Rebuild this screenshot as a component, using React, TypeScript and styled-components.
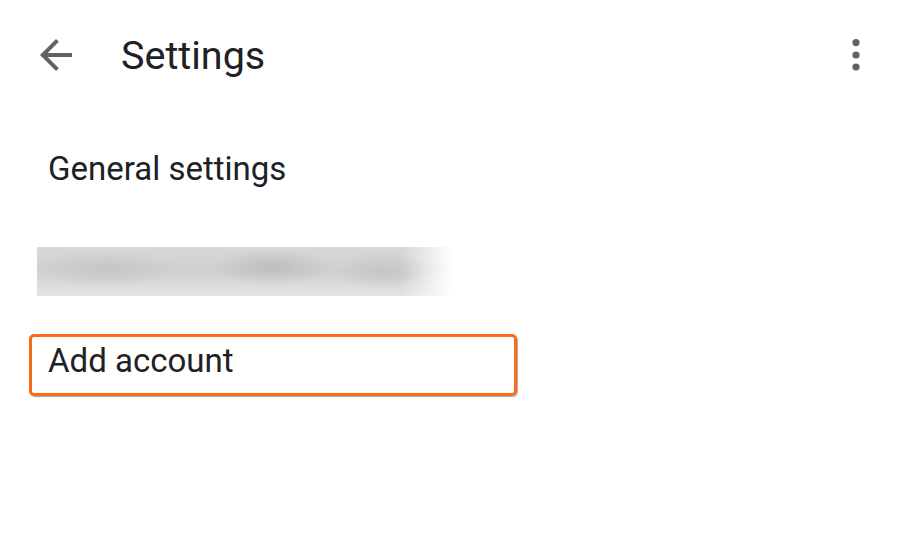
import React from 'react'
import styled, { createGlobalStyle } from 'styled-components'

const GlobalStyle = createGlobalStyle`
  html, body {
    margin: 0;
    padding: 0;
    background: #ffffff;
  }
  body {
    font-family: Roboto, "Noto Sans", "Liberation Sans", sans-serif;
    color: #202124;
  }
`

export default function App() {
  return (
    <>
      <GlobalStyle />
      <Screen>
        <TopBar>
          <IconButton aria-label="Back">
            <svg width="48" height="48" viewBox="0 0 24 24" fill="#5f6368">
              <path d="M20 11H7.83l5.59-5.59L12 4l-8 8 8 8 1.41-1.41L7.83 13H20v-2z" />
            </svg>
          </IconButton>
          <Title>Settings</Title>
          <IconButton aria-label="More options">
            <svg width="48" height="48" viewBox="0 0 24 24" fill="#5f6368">
              <circle cx="12" cy="5.8" r="1.8" />
              <circle cx="12" cy="12" r="1.8" />
              <circle cx="12" cy="18" r="1.8" />
            </svg>
          </IconButton>
        </TopBar>

        <List>
          <Item>General settings</Item>
          <BlurredAccount />
          <Item $highlighted>Add account</Item>
        </List>
      </Screen>
    </>
  )
}

const Screen = styled.div`
  width: 900px;
  height: 553px;
  background: #fff;
  overflow: hidden;
`

const TopBar = styled.header`
  display: flex;
  align-items: center;
  height: 110px;
  padding: 0 20px 0 32px;
`

const IconButton = styled.button`
  display: flex;
  align-items: center;
  justify-content: center;
  width: 48px;
  height: 48px;
  padding: 0;
  border: none;
  background: transparent;
  cursor: pointer;
`

const Title = styled.h1`
  flex: 1;
  margin: 1px 0 0 41px;
  font-size: 39.5px;
  font-weight: 400;
  color: #202124;
`

const List = styled.div`
  display: flex;
  flex-direction: column;
  padding: 32px 0 0 29px;
`

const Item = styled.div<{ $highlighted?: boolean }>`
  box-sizing: border-box;
  width: 488px;
  height: 62px;
  display: flex;
  align-items: center;
  padding: 0 0 10px 16px;
  font-size: 33px;
  color: #202124;
  border: 3px solid ${(p) => (p.$highlighted ? '#fb6b14' : 'transparent')};
  border-radius: 5px;
  box-shadow: ${(p) => (p.$highlighted ? '1px 1px 1px rgba(0,0,0,0.35)' : 'none')};
`

const BlurredAccount = styled.div`
  width: 415px;
  height: 49px;
  margin: 43px 0 38px 8px;
  background:
    linear-gradient(90deg, rgba(255,255,255,0) 0%, rgba(255,255,255,0) 88%, #ffffff 100%),
    radial-gradient(ellipse 70px 18px at 70px 22px, #c6c6c6, rgba(198,198,198,0)),
    radial-gradient(ellipse 60px 18px at 235px 20px, #bdbdbd, rgba(189,189,189,0)),
    radial-gradient(ellipse 50px 18px at 345px 24px, #c6c6c6, rgba(198,198,198,0)),
    linear-gradient(180deg, #d8d8d8 0%, #d0d0d0 50%, #e4e4e4 100%);
`
